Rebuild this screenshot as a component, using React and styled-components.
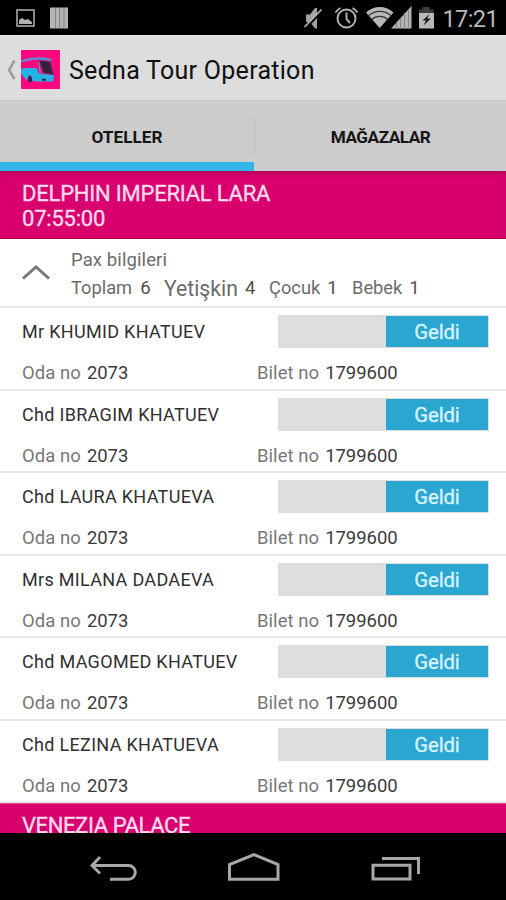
import styled, { createGlobalStyle } from "styled-components";

const GlobalStyle = createGlobalStyle`
  body {
    margin: 0;
    background: #000000;
    font-family: Roboto, "Noto Sans", sans-serif;
  }
`;

const Screen = styled.div`
  display: flex;
  flex-direction: column;
  width: 506px;
  height: 900px;
  overflow: hidden;
  background: #ffffff;
  white-space: nowrap;
`;

const StatusBar = styled.div`
  display: flex;
  flex: none;
  justify-content: space-between;
  box-sizing: border-box;
  height: 35px;
  padding-right: 8px;
  background: #000000;
`;

const StatusGroup = styled.div`
  display: flex;
`;

const Clock = styled.span`
  width: 58px;
  font-size: 23.5px;
  line-height: 38px;
  letter-spacing: -0.6px;
  text-align: right;
  color: #b9b9b9;
`;

const ActionBar = styled.div`
  display: flex;
  flex: none;
  align-items: center;
  box-sizing: border-box;
  height: 65px;
  padding: 3px 0 0 6px;
  background: #dddddd;
  border-top: 1px solid #efefef;
`;

const Title = styled.h1`
  margin: 0 0 0 9px;
  padding-top: 2px;
  font-weight: normal;
  font-size: 25px;
  line-height: 32px;
  letter-spacing: 0.28px;
  color: #101010;
`;

const Tabs = styled.div`
  display: grid;
  grid-template-columns: 254px 1px 251px;
  flex: none;
  align-items: center;
  height: 71px;
  background: #cccccc;
  box-shadow: inset 0 1px 0 #c8c8c8, inset 0 4px 0 #d0d0d0;
`;

const Tab = styled.div`
  box-sizing: border-box;
  height: 71px;
  padding-top: 2px;
  border-bottom: 9px solid ${(props) => (props.$active ? "#33b5e5" : "transparent")};
  font-weight: bold;
  font-size: 17.2px;
  line-height: 71px;
  letter-spacing: ${(props) => props.$spacing};
  text-align: center;
  color: #151515;
`;

const TabDivider = styled.div`
  height: 34px;
  background: #bdbdbd;
`;

const HotelHeader = styled.div`
  flex: none;
  box-sizing: border-box;
  height: ${(props) => props.$height};
  padding: ${(props) => props.$top} 22px 0;
  font-size: 22px;
  line-height: ${(props) => props.$line};
  letter-spacing: ${(props) => props.$spacing};
  color: #ffd9ec;
  -webkit-text-stroke: 0.35px #ffd9ec;
  background: #d8006c;
  box-shadow: ${(props) =>
    props.$shaded
      ? "inset 0 5px 5px -3px #a80054, inset 0 -1px 0 #b0003c"
      : "inset 0 1px 0 #e53c80"};
`;

const PaxPanel = styled.div`
  display: flex;
  flex: none;
  box-sizing: border-box;
  height: 69px;
  padding-left: 22px;
  border-bottom: 2px solid #e9e9e9;
`;

const PaxText = styled.div`
  padding: 9px 0 0 20px;
  font-size: 18.5px;
  line-height: 25px;
  letter-spacing: 0.1px;
  color: #6b6b6b;
`;

const PaxCounts = styled.div`
  display: flex;
  align-items: baseline;
`;

const Count = styled.div`
  display: flex;
  align-items: baseline;
  gap: ${(props) => props.$gap};
  width: ${(props) => props.$width};
  line-height: 28px;
`;

const CountLabel = styled.span`
  font-size: 18.3px;
  letter-spacing: 0;
`;

// "Yetişkin" sits a little lower than the other counters
const LargeLabel = styled(CountLabel)`
  font-size: 21.2px;
  transform: translateY(2px);
`;

const CountValue = styled.span`
  color: #505050;
`;

const Passenger = styled.div`
  flex: none;
  box-sizing: border-box;
  height: 82.55px;
  padding: 7px 17px 0 22px;
  border-bottom: 2px solid #e9e9e9;
`;

const PassengerTop = styled.div`
  display: flex;
  justify-content: space-between;
  height: 34px;
`;

const Name = styled.div`
  font-size: 18px;
  line-height: 34px;
  letter-spacing: 0.31px;
  color: #303030;
`;

const Switch = styled.div`
  display: flex;
  justify-content: flex-end;
  box-sizing: border-box;
  width: 211px;
  height: 33px;
  padding: 1px 1px 1px 0;
  background: #dedede;
`;

const Thumb = styled.div`
  width: 102px;
  height: 31px;
  font-size: 20.3px;
  line-height: 33px;
  letter-spacing: -0.1px;
  text-align: center;
  color: #d6f2fb;
  -webkit-text-stroke: 0.35px #d6f2fb;
  background: #2ba6d1;
`;

const Details = styled.div`
  display: grid;
  grid-template-columns: 235px 1fr;
  padding-top: 12px;
  font-size: 18.5px;
  line-height: 25px;
`;

const Detail = styled.div`
  display: flex;
  gap: 6px;
`;

const DetailLabel = styled.span`
  letter-spacing: 0.05px;
  color: #777777;
`;

const DetailValue = styled.span`
  letter-spacing: -0.05px;
  color: #3b3b3b;
`;

const NavBar = styled.div`
  flex: none;
  height: 67px;
  background: #000000;
`;

const Drawing = styled.svg`
  display: block;
  flex: none;
`;

const passengers = [
  "Mr KHUMID KHATUEV",
  "Chd IBRAGIM KHATUEV",
  "Chd LAURA KHATUEVA",
  "Mrs MILANA DADAEVA",
  "Chd MAGOMED KHATUEV",
  "Chd LEZINA KHATUEVA",
];

const NotificationIcons = () => (
  <Drawing width="80" height="35" viewBox="0 0 80 35">
    <rect x="17" y="10" width="17" height="16" fill="none" stroke="#a9a9a9" strokeWidth="1.6" />
    <path d="M19 24V20l3-2 3 2 3-1 4 3v2z" fill="#b0b0b0" />
    <rect x="50" y="7.500" width="18" height="21" fill="#b4b4b4" />
    <path d="M55.500 8v20M59.500 8v20M64 8v20" stroke="#858585" strokeWidth="1" />
  </Drawing>
);

const SystemIcons = () => (
  <Drawing width="140" height="35" viewBox="300 0 140 35">
    <path d="M306 14.500h4l5-6.500h2v20.500h-2l-5-6.500h-4z" fill="#a2a2a2" />
    <path d="M306 28L323 10" stroke="#000000" strokeWidth="2" />
    <path d="M304.500 27L321.500 9.500" stroke="#b8b8b8" strokeWidth="1.700" />
    <g fill="none" stroke="#b5b5b5" strokeWidth="1.900">
      <circle cx="346.500" cy="18.500" r="9" />
      <path d="M346.500 12.500v6.500l3.500 4M335.500 12.500a12 12 0 0 1 5-4.500M352.500 8a12 12 0 0 1 5 4.500" />
    </g>
    <path d="M366 12.500a20 20 0 0 1 27.500 0L379.700 28z" fill="#b8b8b8" />
    <path d="M368 16a17 17 0 0 1 23.500 0M371.500 19.700a12 12 0 0 1 16.500 0" fill="none" stroke="#353535" strokeWidth="1.300" />
    <path d="M411.500 6v22.500H391z" fill="#b4b4b4" />
    <path d="M396.500 22v7M400.500 18v11M404.500 13v16M408.500 9v20" stroke="#858585" strokeWidth="1" />
    <path d="M419 14V9.500h3.500V7h7v2.500h4V14z" fill="#3c3c3c" />
    <rect x="419" y="13" width="15" height="15.500" fill="#b8b8b8" />
    <path d="M429.500 14l-7 6.500h3.500l-2.500 5 7.500-7h-4z" fill="#151515" />
  </Drawing>
);

const BackArrow = () => (
  <Drawing width="15" height="26" viewBox="0 0 15 26">
    <path d="M8.500 3.500L3 13l5.500 9" fill="none" stroke="#9d9d9d" strokeWidth="2.600" />
  </Drawing>
);

const BusLogo = () => (
  <Drawing width="39" height="39" viewBox="0 0 39 39">
    <rect width="39" height="39" fill="#fb087f" />
    <path d="M0 10.500C7 7.500 18 6 29 8.500l2 2.500-11-1C12 9 6 11 0 12.500z" fill="#5a8fd0" />
    <path d="M0 19l4-1h11.500l2.500 5.500 13.500 1.500 1.500 1-1 5.500H15l-4-1V28l-2-2-2.500 2v2.500L4 28.500l-4-5z" fill="#22b3e4" />
    <path d="M18 10.500l11 1 3.500 13-10-1.500z" fill="#34243a" stroke="#72376d" strokeWidth="0.600" />
    <path d="M7 32v-5l2-2 2 3v4zM21 28.500l4 .5v2l-4-.5z" fill="#392554" />
    <path d="M17.500 12l1.500 9 1.500 2.500" fill="none" stroke="#5a9fd0" strokeWidth="1" />
  </Drawing>
);

const NavIcons = () => (
  <Drawing width="506" height="67" viewBox="0 833 506 67" fill="none" stroke="#a7a7a7" strokeWidth="3">
    <path d="M100 857l-8 8.500 8 8M92 865.500h36.500a6.700 6.700 0 0 1 0 13.700H110" />
    <path d="M229.500 879.200V864.500L254 854.500l24 10v14.700z" />
    <path d="M373 865.200h37v13.800h-37zM382 858.500h36.500V874" />
  </Drawing>
);

function PassengerRow({ name }) {
  return (
    <Passenger>
      <PassengerTop>
        <Name>{name}</Name>
        <Switch>
          <Thumb>Geldi</Thumb>
        </Switch>
      </PassengerTop>
      <Details>
        <Detail>
          <DetailLabel>Oda no</DetailLabel>
          <DetailValue>2073</DetailValue>
        </Detail>
        <Detail>
          <DetailLabel>Bilet no</DetailLabel>
          <DetailValue>1799600</DetailValue>
        </Detail>
      </Details>
    </Passenger>
  );
}

export default function App() {
  return (
    <>
      <GlobalStyle />
      <Screen>
        <StatusBar>
          <NotificationIcons />
          <StatusGroup>
            <SystemIcons />
            <Clock>17:21</Clock>
          </StatusGroup>
        </StatusBar>
        <ActionBar>
          <BackArrow />
          <BusLogo />
          <Title>Sedna Tour Operation</Title>
        </ActionBar>
        <Tabs>
          <Tab $active $spacing="0px">OTELLER</Tab>
          <TabDivider />
          <Tab $spacing="-0.5px">MAĞAZALAR</Tab>
        </Tabs>
        <HotelHeader $height="68px" $top="10px" $line="25px" $spacing="-0.22px" $shaded>
          DELPHIN IMPERIAL LARA
          <br />
          07:55:00
        </HotelHeader>
        <PaxPanel>
          <Drawing width="29" height="67" viewBox="0 0 29 67">
            <path d="M1 39.500L14 28l13 11.500" fill="none" stroke="#777777" strokeWidth="3" />
          </Drawing>
          <PaxText>
            Pax bilgileri
            <PaxCounts>
              <Count $gap="8px" $width="93px">
                <CountLabel>Toplam</CountLabel>
                <CountValue>6</CountValue>
              </Count>
              <Count $gap="7px" $width="105px">
                <LargeLabel>Yetişkin</LargeLabel>
                <CountValue>4</CountValue>
              </Count>
              <Count $gap="7px" $width="83px">
                <CountLabel>Çocuk</CountLabel>
                <CountValue>1</CountValue>
              </Count>
              <Count $gap="7px" $width="80px">
                <CountLabel>Bebek</CountLabel>
                <CountValue>1</CountValue>
              </Count>
            </PaxCounts>
          </PaxText>
        </PaxPanel>
        {passengers.map((name) => (
          <PassengerRow key={name} name={name} />
        ))}
        <HotelHeader $height="30px" $top="14px" $line="17px" $spacing="-0.4px">
          VENEZIA PALACE
        </HotelHeader>
        <NavBar>
          <NavIcons />
        </NavBar>
      </Screen>
    </>
  );
}
